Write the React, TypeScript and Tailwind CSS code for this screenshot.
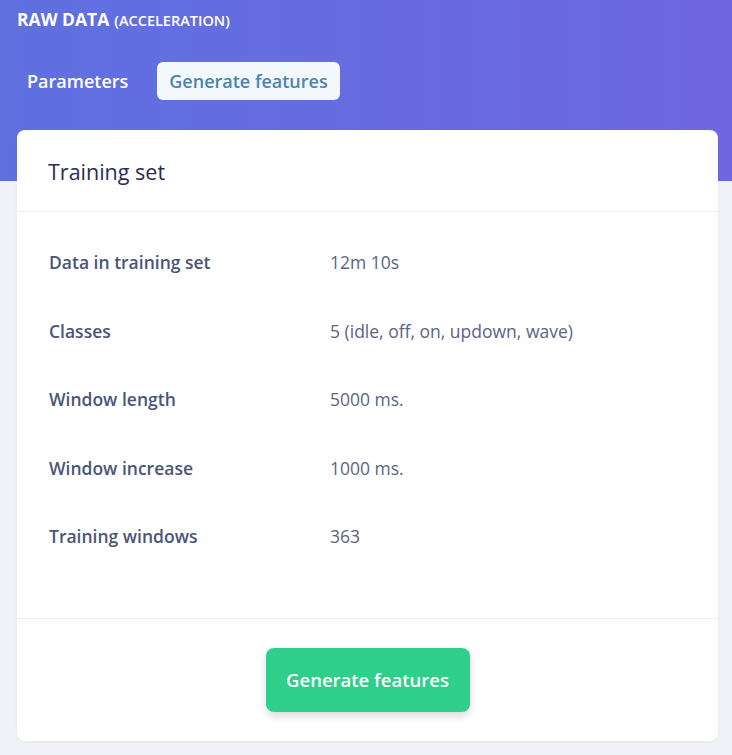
const rows = [
	{ label: 'Data in training set', value: '12m 10s' },
	{ label: 'Classes', value: '5 (idle, off, on, updown, wave)' },
	{ label: 'Window length', value: '5000 ms.' },
	{ label: 'Window increase', value: '1000 ms.' },
	{ label: 'Training windows', value: '363' },
]

export default function App() {
	return (
		<div className="min-h-screen bg-[#f1f2f8] font-['Open_Sans',sans-serif]">
			<div className="h-[181px] bg-gradient-to-r from-[#5f70df] to-[#6f67e2] px-[17px] pt-[7px]">
				<div className="flex items-baseline gap-[5px] text-white">
					<span className="text-[17.5px] font-bold leading-[24px]">RAW DATA</span>
					<span className="text-[14.5px] font-semibold">(ACCELERATION)</span>
				</div>
				<div className="mt-[30px] flex items-center gap-[19px]">
					<div className="px-[10px] py-[6px] text-[18px] font-semibold leading-[26px] text-white">
						Parameters
					</div>
					<div className="rounded-[6px] bg-[#f3f8fc] px-[12px] py-[6px] text-[18px] font-semibold leading-[26px] text-[#4a86ad]">
						Generate features
					</div>
				</div>
			</div>

			<div className="-mt-[51px] ml-[17px] w-[701px] rounded-[8px] bg-white shadow-[0_1px_3px_rgba(30,40,90,0.06)]">
				<div className="flex h-[82px] items-center border-b border-[#eceef3] pl-[31px] pt-[3px]">
					<h2 className="text-[21.5px] font-normal text-[#2b2d52]">Training set</h2>
				</div>

				<div className="pt-[16px] pb-[47px]">
					{rows.map((row) => (
						<div key={row.label} className="grid h-[68.5px] grid-cols-[281px_1fr] items-center pl-[32px]">
							<div className="text-[17.5px] font-semibold text-[#4b5577]">{row.label}</div>
							<div className="text-[17.5px] text-[#5b6484]">{row.value}</div>
						</div>
					))}
				</div>

				<div className="flex justify-center border-t border-[#eceef3] pt-[29px] pb-[29px]">
					<button
						type="button"
						className="h-[64px] w-[204px] rounded-[8px] bg-[#2ecf8b] text-[18.5px] font-semibold text-white shadow-[0_4px_8px_rgba(0,0,0,0.15)]"
					>
						Generate features
					</button>
				</div>
			</div>
		</div>
	)
}
